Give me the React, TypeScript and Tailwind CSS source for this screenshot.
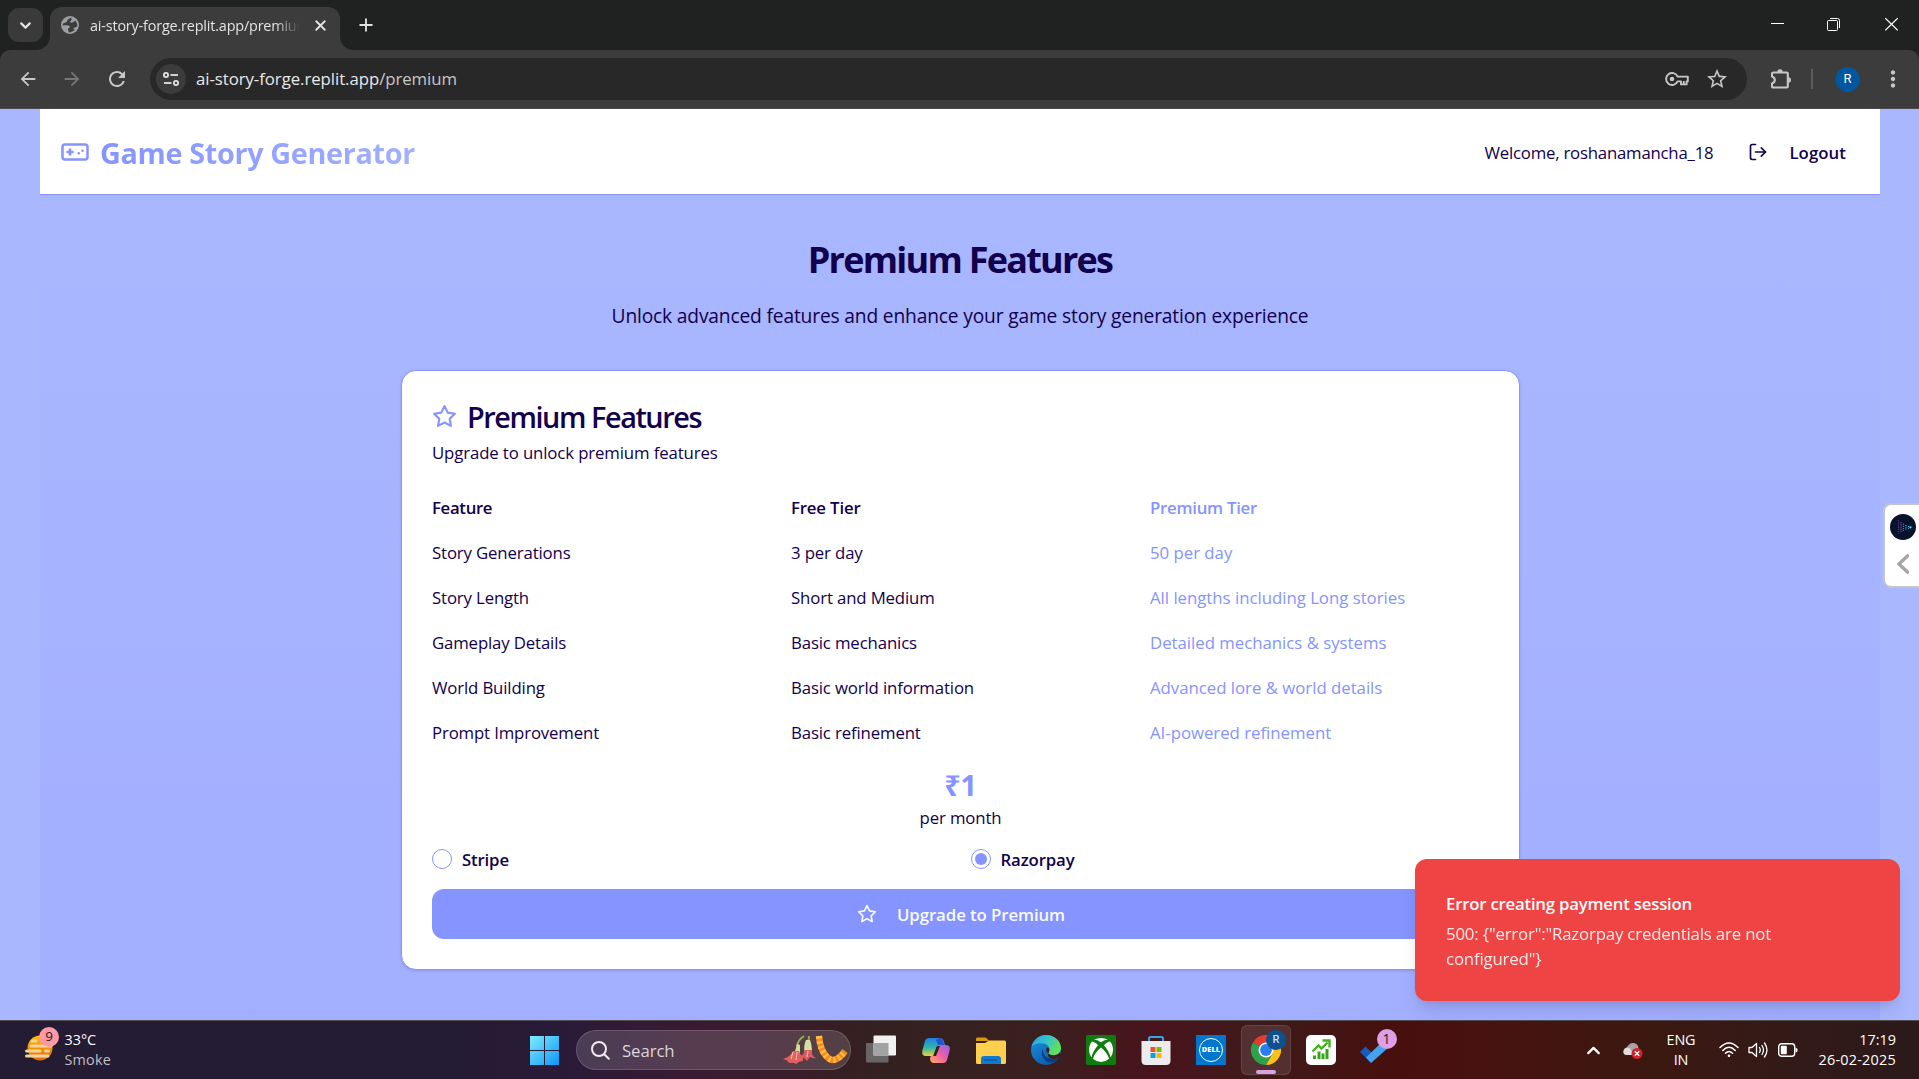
import React from 'react';
import { ChevronDown, ChevronUp, Gamepad, LogOut, Plus, X } from 'lucide-react';
import { MdArrowBack, MdArrowForward, MdRefresh, MdMoreVert, MdStarOutline } from 'react-icons/md';

function Star({ className }: { className: string }) {
  return (
    <svg viewBox="0 0 24 24" fill="none" stroke="currentColor" strokeWidth="2" strokeLinecap="round" strokeLinejoin="round" className={className}>
      <polygon points="12 2 15.09 8.26 22 9.27 17 14.14 18.18 21.02 12 17.77 5.82 21.02 7 14.14 2 9.27 8.91 8.26 12 2" />
    </svg>
  );
}

function TabStrip() {
  return (
    <div className="flex h-[50px] shrink-0 items-start bg-[#202221] text-[#e3e3e3]">
      <div className="ml-2 mt-2 flex h-[34px] w-[35px] items-center justify-center rounded-[11px] bg-[#3a3a3a]">
        <ChevronDown className="size-[17px]" strokeWidth={3} />
      </div>
      <div className="relative ml-[7px] mt-[7px] flex h-[43px] w-[290px] items-center rounded-t-[12px] bg-[#3c3c3c] pb-[7px] pl-[11px]">
        <svg viewBox="0 0 14 14" className="absolute -left-[14px] bottom-0 size-[14px]"><path d="M14 0V14H0C8 14 14 8 14 0Z" fill="#3c3c3c" /></svg>
        <svg viewBox="0 0 14 14" className="absolute -right-[14px] bottom-0 size-[14px]"><path d="M0 0V14H14C6 14 0 8 0 0Z" fill="#3c3c3c" /></svg>
        <svg viewBox="0 0 18 18" className="size-[18px] shrink-0">
          <circle cx="9" cy="9" r="9" fill="#9aa0a6" />
          <path d="M10.2 1.8C8.3 2 8.2 3.2 6.8 3.6 6 4.3 6.4 5.3 5.6 6 4.6 6.8 3.6 7 2.1 7.4 1.8 8.4 1.7 9 1.8 9.8 4 9.3 5.6 9.2 7.2 9.6 9 9.9 9.2 10.9 8.4 11.7 6.8 12 6.7 13.4 7.3 14.4 7.5 15.2 7.5 15.9 8 16.4 10 16.4 12.6 15.3 14 13.8 12.4 13.6 12 12.4 13.1 11.8 14.6 11.4 15.3 10.9 16.3 10.6 16.5 8.6 15.8 6.2 14.4 4.7 13.6 5.9 12.4 5.2 11.8 6.3 11 7 9.6 6.8 9.2 6 8.7 5 10 4.6 10.6 3.9 10.9 3 10.2 2.6 10.2 1.8Z" fill="#3c3c3c" />
        </svg>
        <div className="ml-[11px] w-[210px] overflow-hidden whitespace-nowrap pt-px text-[14.4px] leading-[20px] tracking-[-0.012em] [mask-image:linear-gradient(to_right,black_88%,transparent_100%)]">
          ai-story-forge.replit.app/premium
        </div>
        <X className="ml-[12px] size-[17px] shrink-0" strokeWidth={2.6} />
      </div>
      <Plus className="ml-[16px] mt-[15px] size-[20px]" strokeWidth={2.2} />
      <div className="ml-auto mt-[17px] flex items-center gap-[43px] pr-[21px] text-white">
        <svg viewBox="0 0 13 14" className="h-[14px] w-[13px]"><path d="M0 6.5H13" stroke="currentColor" /></svg>
        <svg viewBox="0 0 13 14" className="h-[14px] w-[13px]" fill="none" stroke="currentColor"><rect x="0.5" y="3.5" width="10" height="10" rx="1" /><path d="M3 1.5H10.5Q12.5 1.5 12.5 3.5V11" /></svg>
        <svg viewBox="0 0 13 14" className="ml-[2px] h-[14px] w-[13px]"><path d="M0.3 1.3L12.7 13.3M12.7 1.3L0.3 13.3" stroke="currentColor" strokeWidth="1.2" /></svg>
      </div>
    </div>
  );
}

function Toolbar() {
  return (
    <div className="bg-[#202221]">
      <div className="flex h-[59px] items-center rounded-t-[10px] border-b border-[#4c4a4c] bg-[#3c3c3c] text-[#c7c7c7]">
        <MdArrowBack className="ml-[17px] size-[22px]" />
        <MdArrowForward className="ml-[22px] size-[22px] text-[#777777]" />
        <MdRefresh className="ml-[22px] size-[24px]" />
        <div className="ml-[21px] flex h-[42px] w-[1597px] items-center rounded-full bg-[#282828] pl-[6px]">
          <div className="flex size-[30px] items-center justify-center rounded-full bg-[#3c3c3c]">
            <svg viewBox="0 0 16 14" className="h-[14px] w-[16px]" fill="none" stroke="#e3e3e3" strokeWidth="1.8">
              <circle cx="3" cy="3" r="2.1" /><path d="M7.5 3H15" /><circle cx="13" cy="11" r="2.1" /><path d="M1 11H8.5" />
            </svg>
          </div>
          <div className="ml-[10px] text-[16.8px] leading-[24px] tracking-[-0.0033em] text-[#e8e8e8]">
            ai-story-forge.replit.app<span className="text-[#c7c7c7]">/premium</span>
          </div>
          <svg viewBox="0 0 24 14" className="ml-auto h-[14px] w-[24px]" fill="none" stroke="#c7c7c7" strokeWidth="1.9">
            <path d="M12.6 4.6A6 6 0 1 0 12.6 9.4H16V12.4H21.6V9.4H22.8V4.6Z" strokeLinejoin="round" />
            <circle cx="7" cy="7" r="2.3" fill="#c7c7c7" stroke="none" />
            <path d="M18.8 12V9" />
          </svg>
          <MdStarOutline className="ml-[16px] mr-[18px] size-[24px]" />
        </div>
        <svg viewBox="0 0 22 22" className="ml-[23px] size-[22px]">
          <path d="M3.500 4.500H16.800Q17.800 4.500 17.800 5.500V18.500Q17.800 19.500 16.800 19.500H3Q2 19.500 2 18.500V15.500Q4.800 14.500 4.800 12Q4.800 9.500 2 8.500V5.500Q2 4.500 3.500 4.500Z" fill="none" stroke="currentColor" strokeWidth="2.100" strokeLinejoin="round" />
          <path d="M7.300 4A2.700 2.700 0 0 1 12.700 4ZM18.300 9.300A2.700 2.700 0 0 1 18.300 14.700Z" fill="currentColor" />
        </svg>
        <div className="ml-[19px] h-[20px] w-[2px] bg-[#5c5c5c]" />
        <div className="ml-[22px] flex size-[25px] items-center justify-center rounded-full bg-[#00569f] font-[Roboto] text-[13px] text-white">R</div>
        <MdMoreVert className="ml-[20px] size-[26px]" />
      </div>
    </div>
  );
}

const features = [
  { name: 'Story Generations', free: '3 per day', premium: '50 per day' },
  { name: 'Story Length', free: 'Short and Medium', premium: 'All lengths including Long stories' },
  { name: 'Gameplay Details', free: 'Basic mechanics', premium: 'Detailed mechanics & systems' },
  { name: 'World Building', free: 'Basic world information', premium: 'Advanced lore & world details' },
  { name: 'Prompt Improvement', free: 'Basic refinement', premium: 'AI-powered refinement' },
];

function PremiumCard() {
  return (
    <section className="ml-[361px] mt-[40px] h-[600px] w-[1119px] rounded-[15px] border border-[#8594ff] bg-white p-[30px] pb-0 text-[16.8px] leading-[25px] shadow-sm">
      <h2 className="flex h-[30px] items-center text-[28.8px] font-semibold leading-[30px] tracking-[-0.0496em]">
        <Star className="mr-[10px] size-[25px] text-[#8594ff]" />
        <span className="pt-[2px]">Premium Features</span>
      </h2>
      <p className="mt-[8px] pt-px tracking-[-0.0075em]">Upgrade to unlock premium features</p>
      <div className="mt-[30px] grid grid-cols-3 gap-5">
        <div className="font-semibold tracking-[-0.02em]">Feature</div>
        <div className="font-semibold tracking-[-0.0096em]">Free Tier</div>
        <div className="font-semibold tracking-[-0.015em] text-[#8594ff]">Premium Tier</div>
        {features.map((f) => (
          <React.Fragment key={f.name}>
            <div className="tracking-[-0.0088em]">{f.name}</div>
            <div className="tracking-[-0.0083em]">{f.free}</div>
            <div className="tracking-[-0.001em] text-[#8594ff]">{f.premium}</div>
          </React.Fragment>
        ))}
      </div>
      <div className="mt-[20px] text-center">
        <div className="text-[28.8px] font-bold leading-[40px] tracking-[-0.0081em] text-[#8594ff]">₹1</div>
        <div className="tracking-[-0.0073em]">per month</div>
      </div>
      <div className="mt-[18px] grid grid-cols-2 gap-5 font-semibold leading-[20px]">
        <label className="flex items-center gap-[10px]">
          <span className="size-[20px] rounded-full border border-[#8594ff]" />
          <span className="pt-[2px] tracking-[-0.01em]">Stripe</span>
        </label>
        <label className="flex items-center gap-[10px]">
          <span className="flex size-[20px] items-center justify-center rounded-full border border-[#8594ff]">
            <span className="size-[12px] rounded-full bg-[#8594ff]" />
          </span>
          <span className="pt-[2px] tracking-[-0.008em]">Razorpay</span>
        </label>
      </div>
      <button className="mt-[19px] flex h-[50px] w-full items-center justify-center rounded-[12px] bg-[#8594ff] pl-px font-semibold tracking-[-0.0049em] text-[#f8fafc]">
        <Star className="mr-[20px] size-[20px]" />
        <span className="pt-px">Upgrade to Premium</span>
      </button>
    </section>
  );
}

function SideWidget() {
  return (
    <div className="absolute right-0 top-[394px] flex h-[85px] w-[36px] flex-col items-center rounded-l-[8px] border-2 border-r-0 border-[#c4c4cc] bg-white pl-px pt-[9px]">
      <svg viewBox="0 0 26 26" className="size-[26px]">
        <circle cx="13" cy="13" r="13" fill="#07122b" />
        <g fill="none" strokeWidth="1.3" strokeDasharray="1.3 0.9">
          <path d="M8.5 6V20" stroke="#5b2c78" /><path d="M11 8V18" stroke="#6a4a9a" /><path d="M13.5 9.5V17" stroke="#6b68c0" /><path d="M16 11V16" stroke="#4f9bd8" /><path d="M18.5 12V15" stroke="#3fc4e8" />
        </g>
        <circle cx="20.5" cy="13.3" r="1.1" fill="#55e0f5" />
      </svg>
      <svg viewBox="0 0 12 20" className="mt-[14px] h-[20px] w-[12px]"><path d="M10.5 2L2 10L10.5 18" fill="none" stroke="#a5a5a5" strokeWidth="3.4" strokeLinecap="square" /></svg>
    </div>
  );
}

function Toast() {
  return (
    <div className="absolute bottom-[19px] right-[19px] h-[142px] w-[485px] rounded-[12px] bg-[#ef4444] px-[31px] pt-[32px] text-[16.8px] text-[#f8fafc] shadow-[0_12px_19px_-4px_rgba(0,0,0,0.12),0_5px_8px_-5px_rgba(0,0,0,0.12)]">
      <div className="font-semibold leading-[25px] tracking-[-0.013em]">Error creating payment session</div>
      <div className="mt-[5px] w-[340px] leading-[25px] tracking-[-0.0097em] opacity-90">500: {'{"error":"Razorpay credentials are not configured"}'}</div>
    </div>
  );
}

function Page() {
  return (
    <main className="relative h-[911px] overflow-hidden bg-[#a9b7ff] pl-10 pr-[39px] text-[#12004d]">
      <div className="h-full bg-gradient-to-b from-[#a9b7ff] from-10% to-[#a2aeff]">
        <header className="flex h-[86px] items-center border-b border-[#8594ff] bg-white pl-5 pr-[34px]">
          <Gamepad className="size-[30px] text-[#8594ff]" />
          <h1 className="ml-[10px] bg-gradient-to-r from-[#8594ff] to-[#a2b0ff] bg-clip-text pt-[2px] text-[28.8px] font-bold leading-[40px] tracking-[-0.0121em] text-transparent">Game Story Generator</h1>
          <span className="ml-auto pt-[2px] text-[16.8px] tracking-[-0.0135em]">Welcome, roshanamancha_18</span>
          <LogOut className="ml-[35px] size-[20px]" />
          <span className="ml-[21px] pt-[2px] text-[16.8px] font-semibold tracking-[0.004em]">Logout</span>
        </header>
        <div className="text-center">
          <h1 className="mt-[42px] text-[36px] font-bold leading-[46px] tracking-[-0.0486em]">Premium Features</h1>
          <p className="mt-[19px] text-[19.2px] leading-[28px] tracking-[-0.0083em]">Unlock advanced features and enhance your game story generation experience</p>
        </div>
        <PremiumCard />
      </div>
      <SideWidget />
      <Toast />
    </main>
  );
}

function SearchArt() {
  return (
    <svg viewBox="0 0 66 30" className="ml-auto mr-[2px] h-[30px] w-[66px]">
      <path d="M22 1Q16 5 15 11" stroke="#8fae4d" strokeWidth="2" fill="none" /><path d="M27 1Q27 4 26 7" stroke="#8fae4d" strokeWidth="2" fill="none" />
      <path d="M15 9L12 20H18L18 10Z" fill="#d7dc9a" /><path d="M24 5Q21 12 23 18H30Q30 10 28 5Z" fill="#d9dfa0" />
      <path d="M11 16Q8 22 1 24Q6 25 7 28Q11 27 14 29Q17 26 21 26Q20 23 23 22Q18 21 17 16Z" fill="#e0605f" />
      <path d="M23 15Q21 21 17 23L22 23L25 26L28 22Q31 24 34 23Q29 21 30 15Z" fill="#dc5a62" />
      <path d="M11 17L9 24M15 17L14 25M26 16L25 22" stroke="#f4b4a6" strokeWidth="1.2" />
      <path d="M37 1Q38 15 45 22Q53 30 63 16" fill="none" stroke="#f78b1a" strokeWidth="6.5" />
      <path d="M37 1Q38 15 45 22Q53 30 63 16" fill="none" stroke="#ffbd4a" strokeWidth="6" strokeDasharray="2.4 2.6" />
    </svg>
  );
}

function Cell({ children }: { children: React.ReactNode }) {
  return <div className="relative flex h-[50px] w-[55px] shrink-0 items-center justify-center">{children}</div>;
}

function TaskbarApps() {
  return (
    <div className="ml-[2.5px] flex items-center">
      <Cell>
        <svg viewBox="0 0 30 28" className="mb-[2px] h-[28px] w-[30px]"><rect x="0" y="8" width="22.5" height="19.5" rx="1" fill="#666" /><rect x="7.5" y="0.5" width="22.5" height="20" rx="1" fill="#f1f1f1" /><path d="M7.5 8H22.5V20.5H7.5Z" fill="#a3a3a3" /></svg>
      </Cell>
      <Cell>
        <svg viewBox="0 0 30 28" className="h-[28px] w-[30px]">
          <defs>
            <linearGradient id="cpA" x1="0" y1="0" x2="0" y2="1"><stop offset="0" stopColor="#1f7fe8" /><stop offset="0.55" stopColor="#2fb7a4" /><stop offset="1" stopColor="#f2d13c" /></linearGradient>
            <linearGradient id="cpB" x1="1" y1="0" x2="0" y2="1"><stop offset="0" stopColor="#8d62ef" /><stop offset="0.5" stopColor="#ef5fa6" /><stop offset="1" stopColor="#ffae5c" /></linearGradient>
          </defs>
          <path d="M8 2H19Q22 2 23 6L24 9H19Q16 9 15 13L13 20H5Q0 20 1.5 14L4 5Q5 2 8 2Z" fill="url(#cpA)" />
          <path d="M18 2Q21 2 22.5 7L23 9H17L15 4Z" fill="#2253d0" />
          <path d="M22 27H13Q9 27 9 22L10 20H12Q14 20 15 16L17 9H25Q30 9 28.5 15L26 24Q25 27 22 27Z" fill="url(#cpB)" />
          <path d="M16 10H19L15 20H12Z" fill="#35201f" />
        </svg>
      </Cell>
      <Cell>
        <svg viewBox="0 0 30 27" className="h-[27px] w-[30px]"><path d="M0 2Q0 0.5 1.5 0.5H9Q10 0.5 11 1.5L13 4H0Z" fill="#d99a0b" /><path d="M0 6H9L13 3.5H28.5Q30 3.5 30 5V25.5Q30 27 28.5 27H1.5Q0 27 0 25.5Z" fill="#ffd04d" /><path d="M5 27V22Q5 19 8 19H22Q25 19 25 22V27Z" fill="#1279cf" /><path d="M8 23H21" stroke="#0b4f96" /></svg>
      </Cell>
      <Cell>
        <svg viewBox="0 0 30 30" className="size-[30px]">
          <defs>
            <linearGradient id="edT" x1="0" y1="0" x2="1" y2="0.5"><stop offset="0" stopColor="#2b9fe0" /><stop offset="0.5" stopColor="#31c3cf" /><stop offset="1" stopColor="#63e257" /></linearGradient>
            <linearGradient id="edB" x1="0" y1="0" x2="0.6" y2="1"><stop offset="0" stopColor="#1b94de" /><stop offset="1" stopColor="#0c5cae" /></linearGradient>
          </defs>
          <circle cx="15" cy="15" r="15" fill="url(#edB)" />
          <path d="M0.5 12C2 5 8 0 15 0C23.5 0 30 6 30 13C30 17.5 26.5 20.3 22.5 20.3C19 20.3 17.3 19 17.3 18C17.3 17.2 18.5 16.5 18.5 14.3C18.5 11 15 8.3 10.5 8.3C5.5 8.3 1.8 10 0.5 12Z" fill="url(#edT)" />
          <path d="M11.5 14C9 20 13 27 20 27.8C23.5 27.6 26.5 25.5 28 23C25 24.3 21 24.6 17 23C13.500 21.500 12 18 11.500 14Z" fill="#0a3f86" />
          <path d="M17.4 18.200C15.200 17.500 14.500 14.500 16 12.600Q18.500 13 18.400 15Q18.300 16.500 17.400 18.200Z" fill="#3b1f20" />
          <path d="M17.3 18.500Q19 20.500 23 20.300Q27 20 29 17.500L30 20Q29.500 22.500 28 23Q23 25 19 23Q16 21 17.300 18.500Z" fill="#3e1c1f" />
        </svg>
      </Cell>
      <Cell>
        <svg viewBox="0 0 30 30" className="size-[30px]">
          <rect width="30" height="30" rx="2" fill="#107c10" />
          <path d="M8 4.800Q11 3 15 3Q19 3 22 4.800Q19 4.600 15 7.200Q11 4.600 8 4.800Z" fill="#fff" />
          <path d="M6 6.500Q8.500 6.500 12 10.200Q6.500 16.500 5.500 22.500Q3 19 3 15Q3 10 6 6.500Z" fill="#fff" />
          <path d="M24 6.500Q21.500 6.500 18 10.200Q23.500 16.500 24.500 22.500Q27 19 27 15Q27 10 24 6.500Z" fill="#fff" />
          <path d="M15 12.500Q21.500 17.800 23 23.800Q19.500 27 15 27Q10.500 27 7 23.800Q8.500 17.800 15 12.500Z" fill="#fff" />
        </svg>
      </Cell>
      <Cell>
        <svg viewBox="0 0 30 30" className="size-[30px]"><path d="M8 8V3.500Q8 2 9.500 2H20.500Q22 2 22 3.500V8" fill="none" stroke="#29abe8" strokeWidth="2" /><path d="M0.500 6H29.500V25.500Q29.500 30 25 30H5Q0.500 30 0.500 25.500Z" fill="#ececec" /><path d="M9.500 12H14.500V17H9.500Z" fill="#f25022" /><path d="M15.500 12H20.500V17H15.500Z" fill="#7fba00" /><path d="M9.500 18H14.500V23H9.500Z" fill="#00a4ef" /><path d="M15.500 18H20.500V23H15.500Z" fill="#ffb900" /></svg>
      </Cell>
      <Cell>
        <div className="flex size-[30px] items-center justify-center bg-[#0076ce]">
          <div className="flex size-[24px] items-center justify-center rounded-full border-[1.5px] border-white text-[7.5px] font-extrabold leading-none text-white">DELL</div>
        </div>
      </Cell>
      <Cell>
        <div className="relative flex size-[50px] items-center justify-center rounded-[6px] border border-white/10 bg-white/10">
          <svg viewBox="0 0 30 30" className="size-[30px]">
            <path d="M15 15L2 7.500A15 15 0 0 1 28 7.500L15 7.500Z" fill="#e33b2e" />
            <path d="M2 7.500A15 15 0 0 0 15 30L21.500 18.700L15 15Z" fill="#2da14c" />
            <path d="M28 7.500A15 15 0 0 1 15 30L21.500 18.700L21.500 11.300L15 7.500Z" fill="#fbc116" />
            <circle cx="15" cy="15" r="7.500" fill="#fff" /><circle cx="15" cy="15" r="5.900" fill="#2f7cf0" />
          </svg>
          <div className="absolute right-[4px] top-[4px] flex size-[20px] items-center justify-center rounded-full bg-[#0b528f] font-[Roboto] text-[11px] font-medium text-[#c9dcee]">R</div>
          <div className="absolute bottom-0 left-[14px] h-[4px] w-[20px] rounded-full bg-[#dda0e4]" />
        </div>
      </Cell>
      <Cell>
        <svg viewBox="0 0 30 30" className="size-[30px]"><rect width="30" height="30" rx="5" fill="#fff" /><path d="M7 24V20.500H10V24ZM11.500 24V16.500H14.500V24ZM15.500 24V18.500H18.500V24ZM19.500 24V14H22.500V24Z" fill="#35a512" /><path d="M6.500 16.500L12.500 10.500L15.500 13.500L21.500 7.500" fill="none" stroke="#43b01c" strokeWidth="2.400" /><path d="M16.500 5.500H23.500V12.500" fill="none" stroke="#43b01c" strokeWidth="2.400" /></svg>
      </Cell>
      <Cell>
        <svg viewBox="0 0 30 24" className="mr-[3px] mt-[3px] h-[24px] w-[30px]"><path d="M0 12L5.500 6.500L16 17L11 23Z" fill="#195abd" /><path d="M11 23L6 17.500L23 1L29 7Z" fill="#41a5ee" /></svg>
        <div className="absolute left-[28px] top-[4px] flex size-[20px] items-center justify-center rounded-full bg-[#dda0e4] text-[14px] leading-none text-[#251b2b]">1</div>
      </Cell>
    </div>
  );
}

function Tray() {
  return (
    <div className="ml-auto flex items-center pr-[23px] text-white">
      <ChevronUp className="size-[21px]" strokeWidth={2.6} />
      <svg viewBox="0 0 20 17" className="ml-[19px] h-[17px] w-[20px]"><path d="M4 13Q0 13 0.500 9Q1 6 4 5.500Q6 0.500 11 1Q15 2 15.500 6V13Z" fill="#a8a3a2" /><path d="M4 13Q0 13 0.500 9Q1 6 4 5.500Q8 5 10 13Z" fill="#dedede" /><circle cx="14" cy="11.500" r="5.500" fill="#d6202a" /><path d="M11.800 9.300L16.200 13.700M16.200 9.300L11.800 13.700" stroke="#fff" strokeWidth="1.400" /></svg>
      <div className="ml-[23px] text-center text-[14.4px] leading-[20px] tracking-[-0.007em]">ENG<br />IN</div>
      <svg viewBox="0 0 20 16" className="ml-[24px] h-[16px] w-[20px]" fill="none" stroke="#fff" strokeWidth="1.500" strokeLinecap="round"><path d="M1 5.500Q10 -3.500 19 5.500M3.800 8.500Q10 2 16.200 8.500M6.500 11.300Q10 7.800 13.500 11.300" /><circle cx="10" cy="13.800" r="1.300" fill="#fff" stroke="none" /></svg>
      <svg viewBox="0 0 20 18" className="ml-[9px] h-[18px] w-[20px]" fill="none" stroke="#fff" strokeWidth="1.300" strokeLinecap="round" strokeLinejoin="round"><path d="M1 6.500H4L8.500 2.500V15.500L4 11.500H1Z" /><path d="M11.500 6.500Q13 9 11.500 11.500M14 4.500Q17 9 14 13.500M16.500 2Q21.500 9 16.500 16" /></svg>
      <svg viewBox="0 0 20 14" className="ml-[10px] h-[14px] w-[20px]"><rect x="0.700" y="0.700" width="16" height="12.600" rx="3" fill="none" stroke="#fff" strokeWidth="1.400" /><rect x="2.800" y="2.800" width="6" height="8.400" rx="1" fill="#fff" /><path d="M17.500 4.500Q19.700 5 19.700 7Q19.700 9 17.500 9.500Z" fill="#fff" /></svg>
      <div className="ml-[20px] text-right text-[14.4px] leading-[20px]">17:19<br /><span className="tracking-[0.0168em]">26-02-2025</span></div>
    </div>
  );
}

function Taskbar() {
  return (
    <footer className="flex h-[59px] shrink-0 items-center border-t border-[#544d50] bg-[linear-gradient(to_right,#231c33_0%,#241b34_24%,#2b1a38_30%,#3a1a33_36%,#3a1c2b_41%,#33211f_46%,#3a201f_54%,#48141c_60%,#3f1a1a_66%,#47100f_72%,#481110_76%,#3d1710_85%,#331a17_93%,#2b191b_100%)]">
      <div className="flex w-[530px] items-center pl-[25px]">
        <div className="relative size-[30px]">
          <svg viewBox="0 0 30 30" className="size-[30px]">
            <defs><linearGradient id="sun" x1="0" y1="0" x2="0" y2="1"><stop offset="0" stopColor="#ffbf00" /><stop offset="1" stopColor="#e8650f" /></linearGradient></defs>
            <circle cx="15" cy="13" r="12.500" fill="url(#sun)" />
            <g stroke="#f3d59a" strokeWidth="3" strokeLinecap="round"><path d="M7 6H11M6 11H26M1.500 16H15M20.500 16H23.500M1.500 21H23" /></g>
          </svg>
          <div className="absolute -top-[8px] left-[14px] flex size-[20px] items-center justify-center rounded-full bg-[#ff99a4] text-[13.5px] leading-none text-[#2a1a20]">9</div>
        </div>
        <div className="ml-[9.5px] text-[14.4px] leading-[20px] text-white">33°C<br /><span className="tracking-[0.0137em] text-[#c1bec6]">Smoke</span></div>
      </div>
      <svg viewBox="0 0 29 29" className="size-[29px] shrink-0">
        <defs><linearGradient id="win" x1="0" y1="0" x2="1" y2="1"><stop offset="0" stopColor="#7cecfd" /><stop offset="1" stopColor="#0f96f5" /></linearGradient></defs>
        <path d="M0 0H14V14H0ZM15 0H29V14H15ZM0 15H14V29H0ZM15 15H29V29H15Z" fill="url(#win)" />
      </svg>
      <div className="ml-[17px] flex h-[40px] w-[275px] shrink-0 items-center rounded-full border border-white/15 bg-white/15 pl-[14px] text-[#dcd5dc]">
        <svg viewBox="0 0 19 19" className="size-[19px]" fill="none" stroke="#f0ecf0" strokeWidth="2" strokeLinecap="round"><circle cx="8" cy="8" r="7" /><path d="M13.200 13.200L17.800 17.800" /></svg>
        <span className="ml-[12px] pt-px text-[16.8px] leading-[22px] tracking-[-0.006em]">Search</span>
        <SearchArt />
      </div>
      <TaskbarApps />
      <Tray />
    </footer>
  );
}

export default function App() {
  return (
    <div className="flex h-[1079px] w-[1919px] flex-col overflow-hidden font-['Open_Sans','Noto_Sans',sans-serif]">
      <TabStrip />
      <Toolbar />
      <Page />
      <Taskbar />
    </div>
  );
}
